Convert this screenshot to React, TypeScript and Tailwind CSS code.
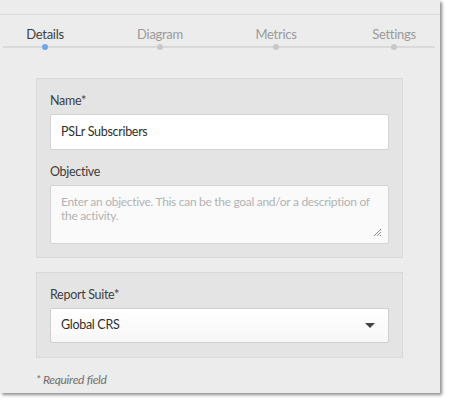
import React from "react";

const steps = [
  { label: "Details", x: 45, active: true },
  { label: "Diagram", x: 160, active: false },
  { label: "Metrics", x: 276, active: false },
  { label: "Settings", x: 394, active: false },
];

const App: React.FC = () => {
  return (
    <div
      className="w-[449px] h-[403px] bg-white overflow-hidden tracking-[-0.3px]"
      style={{ fontFamily: "Lato, 'Open Sans', sans-serif" }}
    >
      <div className="w-[440px] h-[393px] bg-[#ececec] shadow-[2px_2px_3px_rgba(0,0,0,0.45)] flex flex-col">
        <div className="h-[15px] border-b border-[#dadada]" />

        {/* Step header */}
        <div className="relative h-[40px]">
          <div className="absolute left-[3px] right-[5px] top-[31px] h-[2px] bg-[#d9d9d9]" />
          {steps.map((s) => (
            <React.Fragment key={s.label}>
              <span
                className={`absolute top-[11px] -translate-x-1/2 text-[13px] leading-[16px] ${
                  s.active ? "text-[#3e3e3e]" : "text-[#9a9a9a]"
                }`}
                style={{ left: s.x }}
              >
                {s.label}
              </span>
              <span
                className={`absolute top-[29px] w-[6px] h-[6px] -translate-x-1/2 rounded-full ${
                  s.active ? "bg-[#6ea6e8]" : "bg-[#c8c8c8]"
                }`}
                style={{ left: s.x }}
              />
            </React.Fragment>
          ))}
        </div>

        <div className="pl-[36px] pr-[37px] pt-[23px] flex flex-col">
          {/* Card 1 */}
          <div className="bg-[#e4e4e4] border border-[#d9d9d9] px-[13px] pt-[14px] pb-[13px]">
            <div className="text-[12.5px] leading-[16px] text-[#3e3e3e]">Name*</div>
            <div className="mt-[5px] h-[36px] bg-white border border-[#d4d4d4] rounded-[2px] flex items-center px-[10px] text-[12.5px] text-[#2f2f2f]">
              PSLr Subscribers
            </div>
            <div className="mt-[14px] text-[12.5px] leading-[16px] text-[#3e3e3e]">Objective</div>
            <div className="relative mt-[5px] h-[59px] bg-[#fafafa] border border-[#d4d4d4] rounded-[2px] px-[10px] pt-[9px] text-[12px] leading-[14px] text-[#b3b3b3]">
              Enter an objective. This can be the goal and/or a description of the activity.
              <svg
                className="absolute right-[6px] bottom-[6px]"
                width="9"
                height="9"
                viewBox="0 0 9 9"
              >
                <path d="M1 8L8 1M4 8L8 4M7 8L8 7" stroke="#8a8a8a" strokeWidth="1" />
              </svg>
            </div>
          </div>

          {/* Card 2 */}
          <div className="mt-[14px] bg-[#e4e4e4] border border-[#d9d9d9] px-[13px] pt-[14px] pb-[14px]">
            <div className="text-[12.5px] leading-[16px] text-[#3e3e3e]">Report Suite*</div>
            <div className="mt-[5px] h-[35px] bg-gradient-to-b from-white to-[#f7f7f7] border border-[#cfcfcf] rounded-[2px] flex items-center justify-between px-[10px] text-[12.5px] text-[#2f2f2f]">
              <span>Global CRS</span>
              <svg width="10" height="6" viewBox="0 0 10 6" className="mr-[3px]">
                <path d="M0 0H10L5 5Z" fill="#444" />
              </svg>
            </div>
          </div>

          <div className="mt-[13px] text-[12px] italic text-[#6f6f6f]">* Required field</div>
        </div>
      </div>
    </div>
  );
};

export default App;
